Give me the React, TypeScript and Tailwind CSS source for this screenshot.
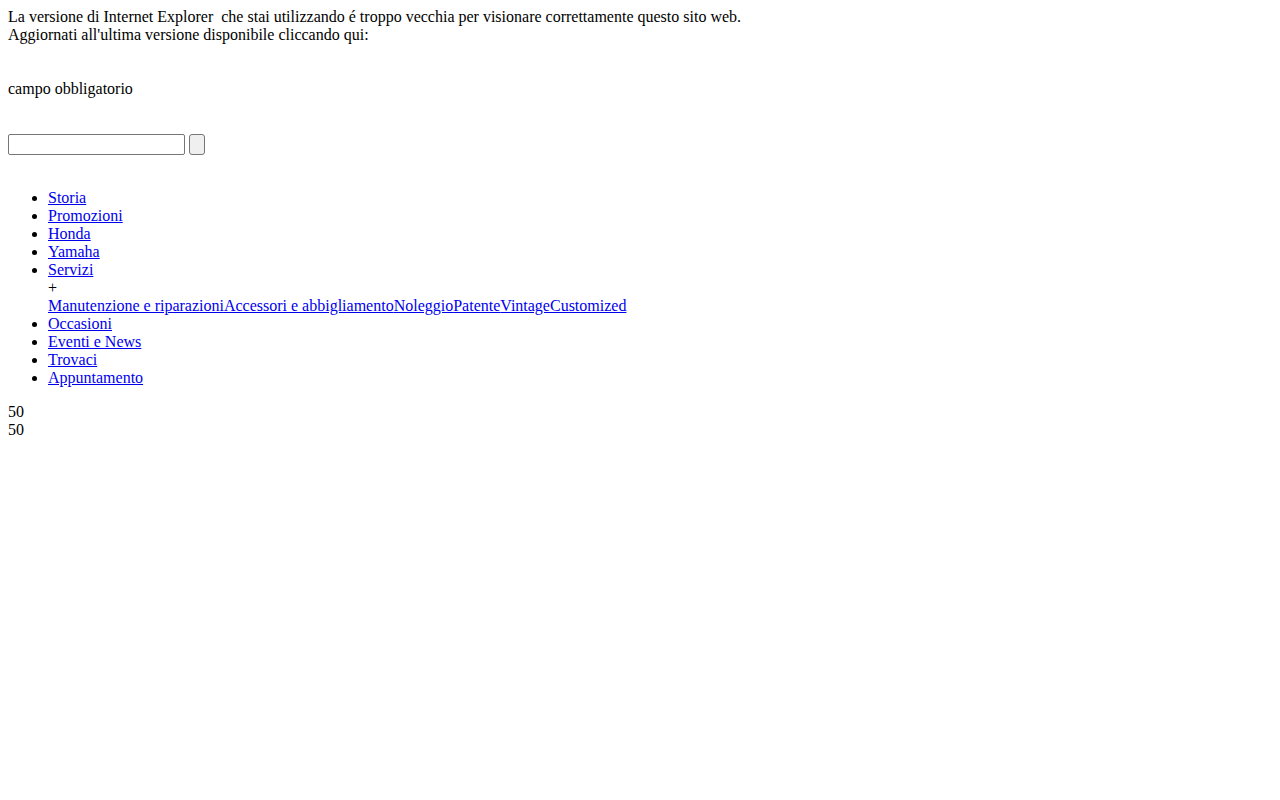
import React from "react";

const linkCls = "text-[#0000ee] underline";

const menu = ["Storia", "Promozioni", "Honda", "Yamaha"];
const menuAfter = ["Occasioni", "Eventi e News", "Trovaci", "Appuntamento"];
const servizi = [
  "Manutenzione e riparazioni",
  "Accessori e abbigliamento",
  "Noleggio",
  "Patente",
  "Vintage",
  "Customized",
];

export default function App() {
  return (
    <div
      className="min-h-[800px] bg-white p-2 text-[16px] leading-[18px] text-black"
      style={{ fontFamily: '"Liberation Serif", "Times New Roman", serif' }}
    >
      <div>
        La versione di Internet Explorer&nbsp; che stai utilizzando é troppo vecchia per visionare correttamente questo sito web.
        <br />
        Aggiornati all'ultima versione disponibile cliccando qui:
      </div>

      <div className="mt-[36px]">campo obbligatorio</div>

      <form className="mt-[36px] flex items-start gap-[4px]" onSubmit={(e) => e.preventDefault()}>
        <input
          type="text"
          className="h-[21px] w-[177px] rounded-[2px] border border-[#767676] bg-white px-[2px]"
        />
        <button
          type="submit"
          className="h-[21px] w-[16px] rounded-[3px] border border-[#767676] bg-[#efefef]"
        />
      </form>

      <ul className="mt-[34px] list-disc pl-[40px]">
        {menu.map((m) => (
          <li key={m}>
            <a href="#" className={linkCls}>
              {m}
            </a>
          </li>
        ))}
        <li>
          <a href="#" className={linkCls}>
            Servizi
          </a>
          <div>+</div>
          <div>
            {servizi.map((s) => (
              <a key={s} href="#" className={linkCls}>
                {s}
              </a>
            ))}
          </div>
        </li>
        {menuAfter.map((m) => (
          <li key={m}>
            <a href="#" className={linkCls}>
              {m}
            </a>
          </li>
        ))}
      </ul>

      <div className="mt-[16px]">
        <div>50</div>
        <div>50</div>
      </div>
    </div>
  );
}
